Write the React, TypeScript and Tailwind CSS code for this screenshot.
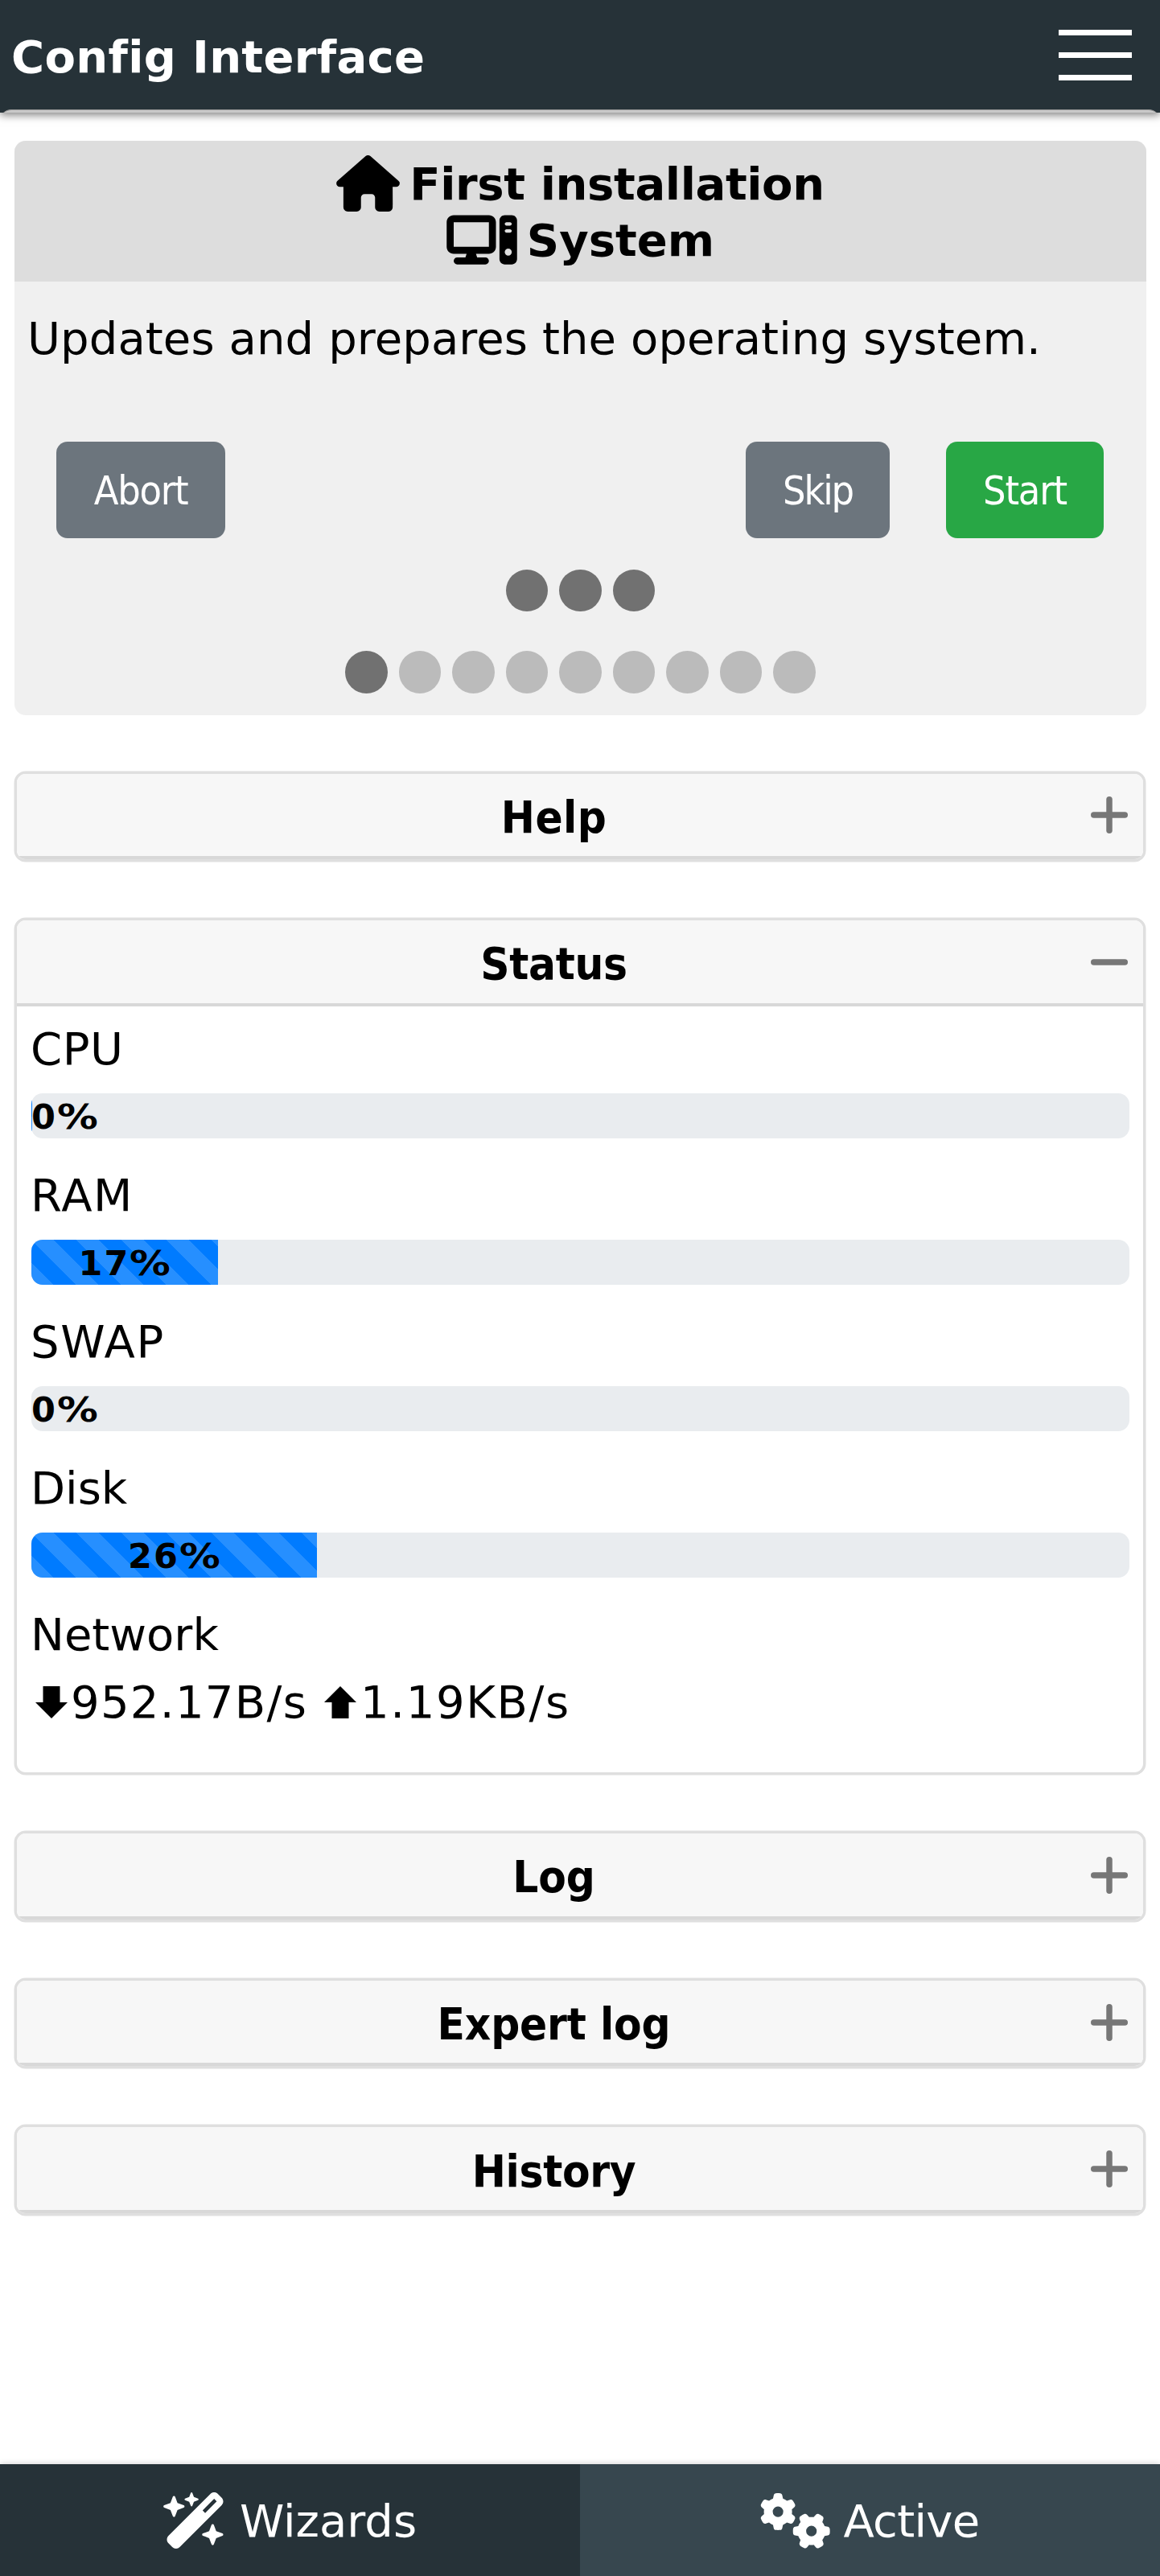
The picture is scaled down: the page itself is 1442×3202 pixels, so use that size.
import type { ReactNode } from "react";
import { FaComputer, FaGears, FaHouse, FaWandMagicSparkles } from "react-icons/fa6";

function Label({ children, className = "" }: { children: ReactNode; className?: string }) {
  return <div className={`h-[70px] whitespace-nowrap leading-[70px] ${className}`}>{children}</div>;
}

function Toggle({ open }: { open: boolean }) {
  return (
    <svg className="mt-px mr-[19px] size-[46px] shrink-0" viewBox="0 0 46 46" stroke="#777" strokeWidth="7.5" strokeLinecap="round">
      <path d="M3.75 23h38.5" />
      {!open && <path d="M23 3.75v38.5" />}
    </svg>
  );
}

function Panel({ title, spacing, children }: { title: string; spacing: string; children?: ReactNode }) {
  return (
    <section className="overflow-hidden rounded-[14px] border-[3px] border-[#dfdfdf] bg-white shadow-[0_0_0_0.5px_#dfdfdf]">
      <h2 className="flex h-[106.6px] items-center border-b-[4px] border-[#d8d8d8] bg-[#f7f7f7]">
        <span className={`flex-1 pt-[6px] text-center font-['DejaVu_Sans_Condensed','DejaVu_Sans',sans-serif] leading-[70px] font-bold ${spacing}`}>
          {title}
        </span>
        <Toggle open={Boolean(children)} />
      </h2>
      {children}
    </section>
  );
}

function Meter({ label, spacing, value, sliver }: { label: string; spacing: string; value: number; sliver?: boolean }) {
  return (
    <div className="mb-[36px]">
      <Label className={`mb-5 -ml-px ${spacing}`}>{label}</Label>
      <div className="h-[56px] overflow-hidden rounded-[14px] bg-[#e9ecef]">
        <div
          className={`flex h-full items-center justify-center bg-[#007bff] bg-[linear-gradient(45deg,rgba(255,255,255,.15)_25%,transparent_25%,transparent_50%,rgba(255,255,255,.15)_50%,rgba(255,255,255,.15)_75%,transparent_75%,transparent)] bg-[length:56px_56px] pt-[2px] text-[43px] leading-[56px] font-bold whitespace-nowrap ${value === 0 ? "justify-start!" : ""}`}
          style={{ width: sliver ? "1px" : `${value}%` }}
        >
          <span className="tracking-[2px]">{value}</span>
          <span className="mr-[8px] inline-block origin-left scale-x-[1.18]">%</span>
        </div>
      </div>
    </div>
  );
}

function Arrow({ up }: { up?: boolean }) {
  return (
    <svg className={`h-[40px] w-[40px] ${up ? "rotate-180" : ""}`} viewBox="0 0 40 40">
      <path d="M9.5 0h21v20H40L20 40 0 20h9.5z" />
    </svg>
  );
}

function Dots({ total, active }: { total: number; active: number }) {
  return (
    <div className="flex justify-center gap-[14px]">
      {Array.from({ length: total }, (_, i) => (
        <span key={i} className={`size-[52.5px] rounded-full ${i < active ? "bg-[#717171]" : "bg-[#bbb]"}`} />
      ))}
    </div>
  );
}

const button =
  "h-[120px] rounded-[14px] pt-[3px] text-[50px] text-white font-['DejaVu_Sans_Condensed','DejaVu_Sans',sans-serif]";

export default function App() {
  return (
    <div className="flex h-[3202px] w-[1442px] flex-col overflow-hidden bg-white font-['DejaVu_Sans',sans-serif] text-[56px] text-black">
      <header className="flex h-[140px] shrink-0 flex-col bg-[#263238] text-white shadow-[0_3px_10px_rgba(0,0,0,0.5)]">
        <div className="flex h-[136px] justify-between pr-[35px] pl-[14px]">
          <h1 className="pt-[36px] leading-[70px] font-bold tracking-[0.34px]">Config Interface</h1>
          <button aria-label="Menu" className="mt-[37px] flex h-[63px] w-[91px] flex-col justify-between">
            <span className="h-[7px] w-full bg-white" />
            <span className="h-[7px] w-full bg-white" />
            <span className="h-[7px] w-full bg-white" />
          </button>
        </div>
        <div className="h-[4px] overflow-hidden">
          <div className="h-[40px] rounded-[14px] border-t border-[#999] bg-[#c8c8c8]" />
        </div>
      </header>

      <main className="flex flex-col gap-[70px] px-[18px] pt-[35px]">
        <section className="-mr-px h-[713.6px] overflow-hidden rounded-[14px] bg-[#f0f0f0]">
          <div className="h-[175px] bg-[#ddd] pt-[19px] font-bold">
            <div className="flex h-[70px] items-center justify-center gap-[12px] leading-[70px]">
              <FaHouse className="mb-[3px] h-[70px] w-[79px]" />
              <span className="tracking-[-0.37px]">First installation</span>
            </div>
            <div className="flex h-[70px] items-center justify-center gap-[12px] leading-[70px]">
              <FaComputer className="mb-[3px] h-[70px] w-[88px]" />
              <span>System</span>
            </div>
          </div>
          <p className="mt-[36px] ml-[16px] h-[71px] leading-[70px] whitespace-nowrap tracking-[0.1px]">
            Updates and prepares the operating system.
          </p>
          <div className="mt-[92px] flex pr-[53px] pl-[52px]">
            <button className={`${button} mr-auto w-[210px] bg-[#6c757d] tracking-[-1.3px]`}>Abort</button>
            <button className={`${button} mr-[70px] w-[179px] bg-[#6c757d] tracking-[-2.2px]`}>Skip</button>
            <button className={`${button} w-[196px] bg-[#28a745] tracking-[-1.2px]`}>Start</button>
          </div>
          <div className="mt-[38.5px] flex flex-col gap-[49px]">
            <Dots total={3} active={3} />
            <Dots total={9} active={1} />
          </div>
        </section>

        <Panel title="Help" spacing="tracking-[0.4px]" />
        <Panel title="Status" spacing="tracking-[-0.3px]">
          <div className="h-[952.4px] pt-[18px] pr-[17px] pl-[18px]">
            <Meter label="CPU" spacing="tracking-[0.56px]" value={0} sliver />
            <Meter label="RAM" spacing="tracking-[1.5px]" value={17} />
            <Meter label="SWAP" spacing="tracking-[1.8px]" value={0} />
            <Meter label="Disk" spacing="" value={26} />
            <Label className="-ml-px">Network</Label>
            <div className="mt-[14px] ml-[5px] flex h-[70px] items-center leading-[70px] whitespace-nowrap">
              <Arrow />
              <span className="ml-[4px] tracking-[1.3px]">952.17B/s</span>
              <span className="ml-[21px] flex">
                <Arrow up />
              </span>
              <span className="ml-[5px] tracking-[1.6px]">1.19KB/s</span>
            </div>
          </div>
        </Panel>
        <Panel title="Log" spacing="tracking-[-0.1px]" />
        <Panel title="Expert log" spacing="tracking-[-0.17px]" />
        <Panel title="History" spacing="tracking-[-0.33px]" />
      </main>

      <nav className="mt-auto grid h-[139px] shrink-0 grid-cols-2 text-white shadow-[0_0_8px_rgba(0,0,0,0.2)]">
        <a className="flex items-center justify-center gap-[16px] bg-[#263238]">
          <FaWandMagicSparkles className="h-[70px] w-[79px]" />
          <span className="pt-[3px] leading-[70px]">Wizards</span>
        </a>
        <a className="flex items-center justify-center gap-[15px] bg-[#37474f]">
          <FaGears className="h-[70px] w-[88px]" />
          <span className="pt-[3px] leading-[70px] tracking-[-0.69px]">Active</span>
        </a>
      </nav>
    </div>
  );
}
